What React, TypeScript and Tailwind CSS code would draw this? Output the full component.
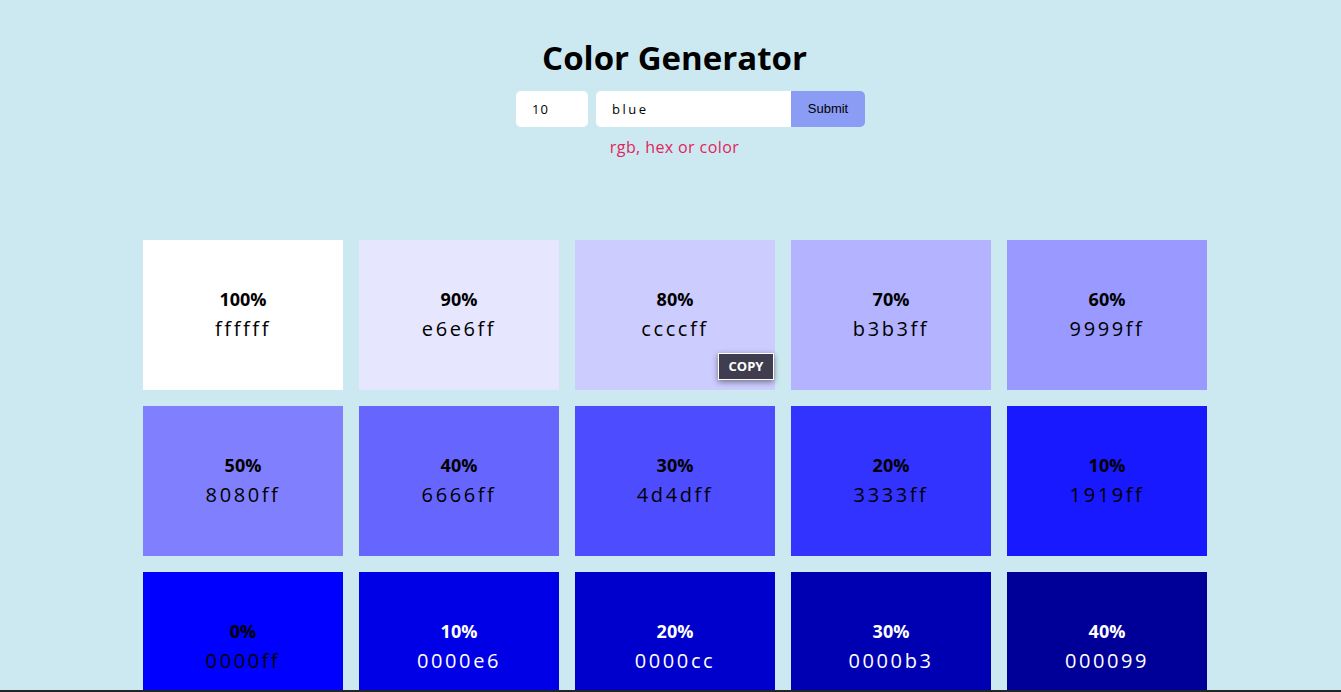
import React from "react";

const tiles = [
  { p: "100%", h: "ffffff", dark: false },
  { p: "90%", h: "e6e6ff", dark: false },
  { p: "80%", h: "ccccff", dark: false },
  { p: "70%", h: "b3b3ff", dark: false },
  { p: "60%", h: "9999ff", dark: false },
  { p: "50%", h: "8080ff", dark: false },
  { p: "40%", h: "6666ff", dark: false },
  { p: "30%", h: "4d4dff", dark: false },
  { p: "20%", h: "3333ff", dark: false },
  { p: "10%", h: "1919ff", dark: false },
  { p: "0%", h: "0000ff", dark: false },
  { p: "10%", h: "0000e6", dark: true },
  { p: "20%", h: "0000cc", dark: true },
  { p: "30%", h: "0000b3", dark: true },
  { p: "40%", h: "000099", dark: true },
];

const font = { fontFamily: '"Open Sans", "Noto Sans", sans-serif' };

export default function App() {
  return (
    <div className="relative h-[692px] w-full overflow-hidden bg-[#cce9f1]" style={font}>
      <div className="flex flex-col items-center pl-2 pt-[36px]">
        <h1 className="text-[33px] font-bold leading-[44px] text-black">Color Generator</h1>
        <form className="ml-8 mt-[11px] flex items-center gap-2" onSubmit={(e) => e.preventDefault()}>
          <input
            defaultValue="10"
            className="h-9 w-[72px] rounded-[5px] bg-white px-4 text-[13px] tracking-[1px] text-black outline-none"
          />
          <div className="flex h-9">
            <input
              defaultValue="blue"
              className="h-9 w-[195px] rounded-l-[5px] bg-white px-4 text-[13px] tracking-[2.5px] text-black outline-none"
            />
            <button
              type="submit"
              className="h-9 w-[74px] rounded-r-[5px] bg-[#8b9cf4] text-[13px] text-black"
              style={{ fontFamily: '"Liberation Sans", Arial, sans-serif' }}
            >
              Submit
            </button>
          </div>
        </form>
        <p className="mt-[9px] text-[16px] leading-[22px] tracking-[0.4px] text-[#e0245e]">rgb, hex or color</p>
      </div>
      <div className="ml-[143px] mt-[82px] grid w-[1064px] grid-cols-5 gap-4">
        {tiles.map((t, i) => (
          <div
            key={i}
            className="relative flex h-[150px] flex-col items-center justify-center pb-[2px]"
            style={{ backgroundColor: "#" + t.h }}
          >
            <div className={"text-[18px] font-bold leading-[24px] " + (t.dark ? "text-white" : "text-black")}>
              {t.p}
            </div>
            <div className={"mt-[5px] text-[20px] leading-[26px] tracking-[2.6px] " + (t.dark ? "text-white" : "text-black")}>
              {t.h}
            </div>
            {i === 2 && (
              <div className="absolute bottom-[10px] right-[1px] flex h-[27px] w-[56px] items-center justify-center border border-white bg-[#3f3d4e] text-[13px] font-bold text-white shadow-[0_2px_6px_rgba(0,0,0,0.45)]">
                COPY
              </div>
            )}
          </div>
        ))}
      </div>
      <div className="absolute bottom-0 left-0 h-[2px] w-full bg-[#222426]" />
    </div>
  );
}
